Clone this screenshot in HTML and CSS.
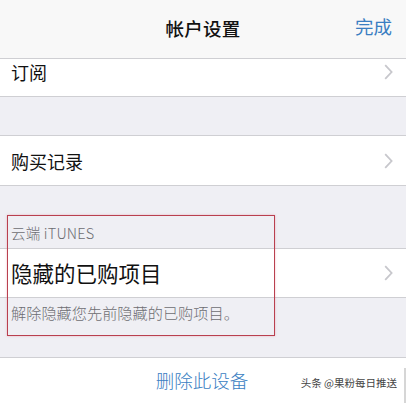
FILE: index.html
```html
<!DOCTYPE html>
<html lang="zh">
<head>
<meta charset="utf-8">
<link rel="stylesheet" href="styles.css">
</head>
<body>
<div class="screen">
  <header class="nav">
    <div class="nav-title">帐户设置</div>
    <div class="nav-done">完成</div>
  </header>

  <div class="row row-cut">
    <span class="row-label">订阅</span>
    <svg class="chev" width="9" height="16" viewBox="0 0 9 16"><path d="M1.2 1.2 L7.6 8 L1.2 14.8" fill="none" stroke="#c7c7cc" stroke-width="1.8"/></svg>
  </div>

  <div class="gap gap-a"></div>

  <div class="row row-b">
    <span class="row-label">购买记录</span>
    <svg class="chev" width="9" height="16" viewBox="0 0 9 16"><path d="M1.2 1.2 L7.6 8 L1.2 14.8" fill="none" stroke="#c7c7cc" stroke-width="1.8"/></svg>
  </div>

  <section class="cloud">
    <div class="gap gap-c">
      <span class="sec-header">云端 iTUNES</span>
    </div>
    <div class="row row-c">
      <span class="row-label big">隐藏的已购项目</span>
      <svg class="chev" width="9" height="16" viewBox="0 0 9 16"><path d="M1.2 1.2 L7.6 8 L1.2 14.8" fill="none" stroke="#c7c7cc" stroke-width="1.8"/></svg>
    </div>
    <div class="sec-footer">解除隐藏您先前隐藏的已购项目。</div>
    <div class="highlight"></div>
  </section>

  <div class="row row-delete">
    <span class="delete">删除此设备</span>
    <span class="watermark">头条 @果粉每日推送</span>
    <span class="edge"></span>
  </div>
</div>
</body>
</html>
```

FILE: styles.css
```css
* { box-sizing: border-box; }
html, body { margin: 0; padding: 0; }
body {
  background: #efeff4;
  font-family: "Noto Sans CJK SC", "Noto Sans", sans-serif;
  color: #111;
}
.screen {
  width: 406px;
  height: 403px;
  overflow: hidden;
  display: flex;
  flex-direction: column;
  background: #efeff4;
}
.nav {
  height: 59px;
  flex: none;
  background: #f8f8f8;
  border-bottom: 1px solid #cfcfd3;
  display: flex;
  align-items: center;
  justify-content: center;
  position: relative;
  padding-bottom: 2px;
}
.nav-title {
  font-size: 18.5px;
  font-weight: 500;
  color: #111;
  letter-spacing: 0.3px;
}
.nav-done {
  position: absolute;
  right: 14px;
  top: 13px;
  font-size: 18.5px;
  color: #3a7ec2;
}
.row {
  background: #fff;
  display: flex;
  align-items: center;
  justify-content: space-between;
  padding: 0 13px 0 11px;
  flex: none;
}
.row-label {
  font-size: 18px;
  font-weight: 400;
  color: #111;
  line-height: 1;
}
.row-label.big { font-size: 21.5px; }
.chev { display: block; }
.row-cut {
  height: 38px;
  border-bottom: 1px solid #cfcfd3;
  padding-bottom: 11px;
}
.gap { flex: none; background: #efeff4; }
.gap-a { height: 38px; }
.row-b {
  height: 51px;
  border-top: 1px solid #cfcfd3;
  border-bottom: 1px solid #cfcfd3;
}
.cloud {
  position: relative;
  display: flex;
  flex-direction: column;
  flex: none;
}
.gap-c {
  height: 62px;
  display: flex;
  align-items: flex-end;
  padding: 0 0 7px 11px;
}
.sec-header {
  font-size: 14.5px;
  font-weight: 300;
  line-height: 16px;
  color: #6d6d72;
  letter-spacing: 0.2px;
}
.row-c {
  height: 50px;
  border-top: 1px solid #cfcfd3;
  border-bottom: 1px solid #cfcfd3;
}
.sec-footer {
  height: 59px;
  padding: 6px 0 0 11px;
  font-size: 15.2px;
  font-weight: 300;
  line-height: 16px;
  color: #6d6d72;
}
.highlight {
  position: absolute;
  left: 7px;
  top: 29px;
  width: 268px;
  height: 121px;
  border: 1.5px solid #b9404f;
  box-shadow: 0 0 2px rgba(230, 120, 140, 0.5);
  pointer-events: none;
}
.row-delete {
  flex: 1;
  border-top: 1px solid #cfcfd3;
  justify-content: center;
  position: relative;
  padding-bottom: 2px;
}
.delete {
  font-size: 18.5px;
  font-weight: 300;
  color: #3a7ec2;
}
.watermark {
  position: absolute;
  right: 9px;
  top: 17px;
  font-size: 10.5px;
  color: #444;
}
.edge {
  position: absolute;
  right: 0;
  top: 10px;
  width: 2px;
  height: 36px;
  background: #d6d6d6;
}
```
